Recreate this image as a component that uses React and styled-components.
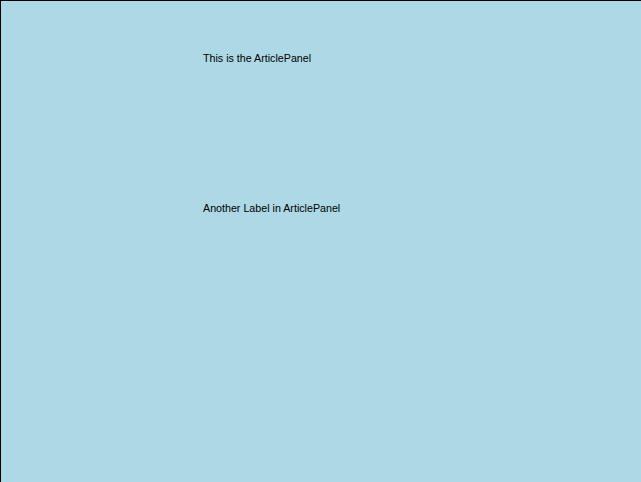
import React from 'react';
import styled, { createGlobalStyle } from 'styled-components';

const GlobalStyle = createGlobalStyle`
  html, body {
    margin: 0;
    padding: 0;
    background: #add8e6;
  }
`;

const Panel = styled.div`
  box-sizing: border-box;
  width: 641px;
  height: 482px;
  background-color: #add8e6;
  border-top: 1px solid #000;
  border-left: 1px solid #000;
  padding: 51px 0 0 202px;
  display: flex;
  flex-direction: column;
  gap: 137px;
`;

const Label = styled.div`
  font-family: "Liberation Sans", Arial, sans-serif;
  font-size: 10.7px;
  line-height: 13px;
  color: #000;
  white-space: nowrap;
`;

const labels = ['This is the ArticlePanel', 'Another Label in ArticlePanel'];

const App = () => {
  return (
    <>
      <GlobalStyle />
      <Panel>
        {labels.map((text, index) => (
          <Label key={index}>{text}</Label>
        ))}
      </Panel>
    </>
  );
};

export default App;
